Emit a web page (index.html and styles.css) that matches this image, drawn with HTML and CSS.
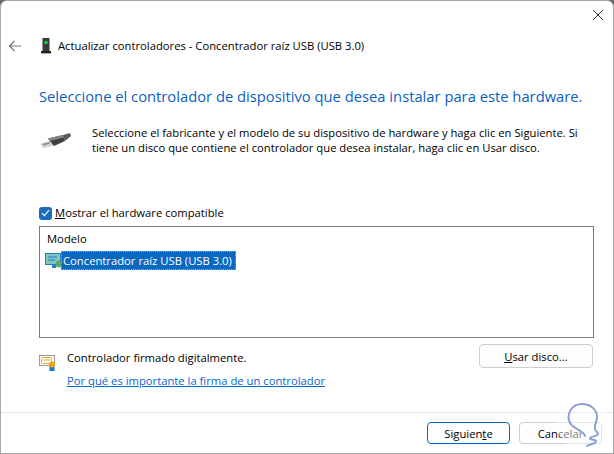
FILE: index.html
```html
<!DOCTYPE html>
<html lang="es">
<head>
    <meta charset="UTF-8">
    <title>Actualizar controladores</title>
    <link rel="stylesheet" href="styles.css">
</head>
<body>
    <div class="dialog">
        <div class="title-bar">
            <svg class="close-icon" width="12" height="12" viewBox="0 0 12 12"><path d="M1 1l10 10M11 1L1 11" stroke="#333" fill="none"/></svg>
        </div>

        <header class="wizard-header">
            <svg class="back-icon" width="14" height="12" viewBox="0 0 14 12"><path d="M13 6H1.5M6.5 1L1.5 6l5 5" stroke="#777" stroke-width="1.2" fill="none"/></svg>
            <svg class="device-icon" width="10" height="16" viewBox="0 0 10 16">
                <rect x="1.5" y="0" width="7" height="13" fill="#3a3a3a"/>
                <rect x="3.5" y="3" width="3" height="3" fill="#1fd24a"/>
                <rect x="0" y="13" width="10" height="2" fill="#222"/>
                <rect x="0" y="15" width="10" height="1" fill="#aaa"/>
            </svg>
            <span>Actualizar controladores - Concentrador raíz USB (USB 3.0)</span>
        </header>

        <main class="content">
            <h1>Seleccione el controlador de dispositivo que desea instalar para este hardware.</h1>

            <div class="intro">
                <svg class="usb-icon" width="30" height="15" viewBox="0 0 30 15">
                    <path d="M0 10.5L10 7.5l3 5-10 2.5C1 15 0 12 0 10.5z" fill="#d2d2d2"/>
                    <path d="M1.5 11l7-2 .5 1.5-6.5 2z" fill="#8a8a8a"/>
                    <path d="M7 5.5L22 2l2 6-11 5z" fill="#404040"/>
                    <path d="M7 5.5L22 2l.8 2.5L9 8z" fill="#858585"/>
                    <path d="M22 2l7-2 1 3-6 5z" fill="#5a5a5a"/>
                </svg>
                <p>Seleccione el fabricante y el modelo de su dispositivo de hardware y haga clic en Siguiente. Si tiene un disco que contiene el controlador que desea instalar, haga clic en Usar disco.</p>
            </div>

            <label class="compat-check">
                <span class="checkbox">
                    <svg width="9" height="8" viewBox="0 0 9 8"><path d="M1 4.2l2.4 2.4L8 1.2" stroke="#fff" stroke-width="1.1" fill="none"/></svg>
                </span>
                <span><u>M</u>ostrar el hardware compatible</span>
            </label>

            <div class="model-list">
                <div class="list-heading">Modelo</div>
                <div class="list-row">
                    <svg class="hub-icon" width="18" height="16" viewBox="0 0 18 16">
                        <rect x="0.5" y="0.5" width="15" height="11" fill="#7fc6c4" stroke="#1f7fc0"/>
                        <path d="M3 4h9M3 7h7" stroke="#1f7fc0"/>
                        <rect x="7" y="12" width="4" height="3" fill="#1f7fc0"/>
                        <circle cx="14" cy="11" r="3.5" fill="#5fa566"/>
                    </svg>
                    <span class="selected-item">Concentrador raíz USB (USB 3.0)</span>
                </div>
            </div>

            <div class="signature">
                <svg class="cert-icon" width="17" height="16" viewBox="0 0 17 16">
                    <rect x="0.5" y="0.5" width="15" height="10" fill="#fff" stroke="#9a9a9a"/>
                    <rect x="2.5" y="2.5" width="10" height="6" rx="1" fill="#fff" stroke="#eeaa10"/>
                    <path d="M4 5h7" stroke="#eeaa10"/>
                    <rect x="10.5" y="11" width="5" height="5" fill="#1878c8"/>
                    <circle cx="13" cy="9.5" r="3" fill="#f3a50a"/>
                </svg>
                <div class="signature-text">
                    <p>Controlador firmado digitalmente.</p>
                    <a href="#">Por qué es importante la firma de un controlador</a>
                </div>
                <button class="btn btn-disk"><u>U</u>sar disco...</button>
            </div>
        </main>

        <footer class="actions">
            <button class="btn btn-primary">Siguien<u>t</u>e</button>
            <button class="btn">Cancelar</button>
        </footer>

        <svg class="watermark" width="56" height="56" viewBox="0 0 56 56">
            <circle cx="28" cy="28" r="27" fill="#fff" fill-opacity="0.45"/>
            <path d="M30 41c-1-5-10-6-15-13-4-8 1-19 12-19 9 0 15 6 15 13 0 5-3 7-2 12 1 3 3 3 3 5 0 2-6 2-8 4-1 2 5 1 6 3 0 3-6 3-9 5" fill="none" stroke="#8b9fd3" stroke-width="2" stroke-linecap="round"/>
        </svg>
    </div>
</body>
</html>
```

FILE: styles.css
```css
* {
    box-sizing: border-box;
    margin: 0;
    padding: 0;
}

body {
    width: 614px;
    height: 454px;
    overflow: hidden;
    background-color: #6b6b6b;
    font-family: "Open Sans", "Noto Sans", sans-serif;
    font-size: 11.25px;
    color: #000;
}

.dialog {
    position: relative;
    display: flex;
    flex-direction: column;
    width: 614px;
    height: 454px;
    background-color: #fff;
    border: 1px solid #a8a8a8;
    border-radius: 7px 7px 0 0;
    overflow: hidden;
}

.title-bar {
    display: flex;
    justify-content: flex-end;
    height: 30px;
    padding: 8px 9px 0 0;
}

.wizard-header {
    display: flex;
    align-items: center;
    height: 16px;
    margin-top: 7px;
    padding-left: 7px;
    line-height: 16px;
}

.back-icon {
    margin-right: 19px;
}

.device-icon {
    margin-right: 7px;
}

.content {
    flex: 1;
    padding: 0 19px 0 38px;
}

.content h1 {
    margin-top: 32px;
    font-size: 14.75px;
    font-weight: 400;
    line-height: 20px;
    color: #0a5fc2;
    white-space: nowrap;
}

.intro {
    display: flex;
    margin-top: 19px;
}

.intro p {
    width: 500px;
    line-height: 15px;
}

.usb-icon {
    flex-shrink: 0;
    margin: 8px 21px 0 2px;
}

.compat-check {
    display: flex;
    align-items: center;
    gap: 3px;
    margin-top: 51px;
    line-height: 14px;
}

.checkbox {
    display: flex;
    align-items: center;
    justify-content: center;
    width: 13px;
    height: 13px;
    border-radius: 3px;
    background-color: #1a6dbd;
}

.model-list {
    height: 112px;
    margin-top: 6px;
    padding: 4px 0 0 5px;
    border: 1px solid #7a7a7a;
}

.list-heading {
    padding-left: 2px;
    line-height: 16px;
}

.list-row {
    display: flex;
    align-items: center;
    margin-top: 4px;
}

.hub-icon {
    flex-shrink: 0;
    margin-right: -2px;
}

.selected-item {
    padding: 0 3px 0 1px;
    height: 19px;
    line-height: 17px;
    color: #fff;
    background-color: #0a68c0;
    border: 1px dotted #f09a30;
    white-space: nowrap;
}

.signature {
    display: flex;
    align-items: flex-start;
    margin-top: 6px;
}

.cert-icon {
    flex-shrink: 0;
    margin: 11px 11px 0 0;
}

.signature-text {
    flex: 1;
    padding-top: 6px;
    line-height: 16px;
}

.signature-text a {
    display: block;
    margin-top: 7px;
    color: #0a66d0;
}

.btn {
    width: 83px;
    height: 22px;
    font-family: inherit;
    font-size: 11.25px;
    color: #000;
    background-color: #fdfdfd;
    border: 1px solid #cfcfcf;
    border-radius: 4px;
}

.btn-disk {
    width: 114px;
    height: 24px;
    margin-right: 1px;
}

.btn-primary {
    border: 1px solid #0a68c0;
}

.actions {
    display: flex;
    justify-content: flex-end;
    gap: 9px;
    height: 41px;
    padding: 9px 11px 0 0;
    border-top: 1px solid #e2e2e2;
}

.watermark {
    position: absolute;
    right: 2px;
    bottom: 2px;
}
```
